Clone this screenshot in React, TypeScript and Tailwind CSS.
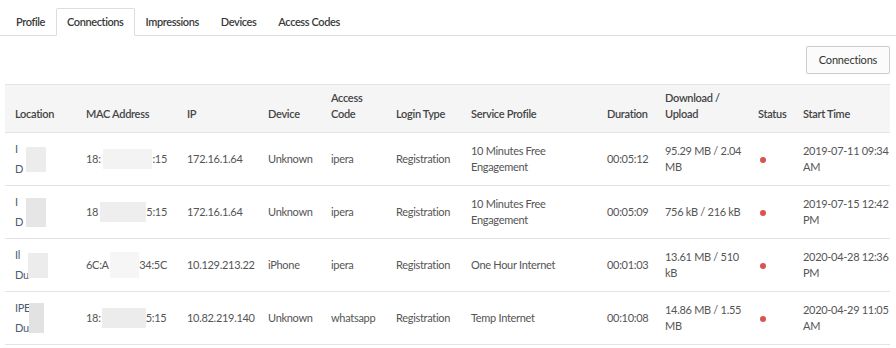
import React from 'react';

type Row = {
  loc1: string;
  loc2: string;
  locBox: string;
  macLeft: string;
  macRight: string;
  macBox: string;
  ip: string;
  device: string;
  code: string;
  service: string[];
  duration: string;
  transfer: string[];
  start: string[];
};

const rows: Row[] = [
  {
    loc1: 'I',
    loc2: 'D',
    locBox: 'ml-[3px] h-[25px] w-[20px] bg-[#ececec]',
    macLeft: '18:',
    macRight: ':15',
    macBox: 'ml-[2px] h-[20px] w-[52px] bg-[#f3f3f3]',
    ip: '172.16.1.64',
    device: 'Unknown',
    code: 'ipera',
    service: ['10 Minutes Free', 'Engagement'],
    duration: '00:05:12',
    transfer: ['95.29 MB / 2.04', 'MB'],
    start: ['2019-07-11 09:34', 'AM'],
  },
  {
    loc1: 'I',
    loc2: 'D',
    locBox: 'ml-[3px] h-[29px] w-[20px] bg-[#e6e6e6]',
    macLeft: '18',
    macRight: '5:15',
    macBox: 'ml-[2px] h-[20px] w-[48px] bg-[#eeeeee]',
    ip: '172.16.1.64',
    device: 'Unknown',
    code: 'ipera',
    service: ['10 Minutes Free', 'Engagement'],
    duration: '00:05:09',
    transfer: ['756 kB / 216 kB'],
    start: ['2019-07-15 12:42', 'PM'],
  },
  {
    loc1: 'Il',
    loc2: 'Du',
    locBox: '-ml-[1px] h-[25px] w-[20px] bg-[#ececec]',
    macLeft: '6C:A',
    macRight: '34:5C',
    macBox: 'ml-[1px] h-[26px] w-[34px] bg-[#f6f6f6]',
    ip: '10.129.213.22',
    device: 'iPhone',
    code: 'ipera',
    service: ['One Hour Internet'],
    duration: '00:01:03',
    transfer: ['13.61 MB / 510', 'kB'],
    start: ['2020-04-28 12:36', 'PM'],
  },
  {
    loc1: 'IPE',
    loc2: 'Du',
    locBox: '-ml-[1px] h-[30px] w-[15px] bg-[#e2e2e2]',
    macLeft: '18:',
    macRight: '5:15',
    macBox: 'ml-[1px] h-[20px] w-[44px] bg-[#ececec]',
    ip: '10.82.219.140',
    device: 'Unknown',
    code: 'whatsapp',
    service: ['Temp Internet'],
    duration: '00:10:08',
    transfer: ['14.86 MB / 1.55', 'MB'],
    start: ['2020-04-29 11:05', 'AM'],
  },
];

const tabs = ['Profile', 'Connections', 'Impressions', 'Devices', 'Access Codes'];

const widths = [71, 101, 81, 63, 65, 75, 136, 58, 93, 45, 97];

const headers = [
  ['Location'],
  ['MAC Address'],
  ['IP'],
  ['Device'],
  ['Access', 'Code'],
  ['Login Type'],
  ['Service Profile'],
  ['Duration'],
  ['Download /', 'Upload'],
  ['Status'],
  ['Start Time'],
];

function Lines({ lines }: { lines: string[] }) {
  return (
    <>
      {lines.map((l, i) => (
        <div key={i} className="whitespace-nowrap">
          {l}
        </div>
      ))}
    </>
  );
}

export default function App() {
  return (
    <div className="h-[348px] w-[896px] bg-white font-['Lato','Liberation_Sans',sans-serif] text-[11px] leading-[16px] tracking-[-0.3px] text-[#555]">
      <div className="flex border-b border-[#ddd] pl-[5px] pr-[6px] pt-[8px]">
        {tabs.map((t) => (
          <div
            key={t}
            className={
              t === 'Connections'
                ? '-mb-px h-[28px] rounded-t-[2px] border border-[#ddd] border-b-white bg-white px-[10px] pt-[5px] font-semibold tracking-[-0.4px] text-[#3a3a3a]'
                : 'h-[27px] border border-transparent px-[10px] pt-[5px] font-semibold tracking-[-0.4px] text-[#3a3a3a]'
            }
          >
            {t}
          </div>
        ))}
      </div>

      <div className="flex justify-end pr-[6px] pt-[10px]">
        <button className="h-[28px] w-[84px] rounded-[2px] border border-[#ccc] bg-[#fbfbfb] text-[11px] tracking-[-0.2px] text-[#333]">
          Connections
        </button>
      </div>

      <div className="pl-[5px] pr-[6px] pt-[10px]">
        <table className="w-[885px] table-fixed border-collapse">
          <colgroup>
            {widths.map((w, i) => (
              <col key={i} style={{ width: w }} />
            ))}
          </colgroup>
          <thead>
            <tr className="h-[48px] border-y border-[#e3e3e3] bg-[#f5f5f5] text-left align-bottom">
              {headers.map((h, i) => (
                <th key={i} className="px-[10px] pb-[10px] font-semibold text-[#444]">
                  <Lines lines={h} />
                </th>
              ))}
            </tr>
          </thead>
          <tbody>
            {rows.map((r, i) => (
              <tr key={i} className="h-[53px] border-b border-[#e3e3e3] align-middle">
                <td className="px-[10px]">
                  <div className="flex items-center">
                    <div className="text-[#4f5b73]">
                      <div>{r.loc1}</div>
                      <div className="mt-[4px]">{r.loc2}</div>
                    </div>
                    <div className={r.locBox} />
                  </div>
                </td>
                <td className="px-[10px]">
                  <div className="flex items-center whitespace-nowrap">
                    <span>{r.macLeft}</span>
                    <span className={r.macBox} />
                    <span>{r.macRight}</span>
                  </div>
                </td>
                <td className="px-[10px]">{r.ip}</td>
                <td className="px-[10px]">{r.device}</td>
                <td className="px-[10px]">{r.code}</td>
                <td className="px-[10px]">Registration</td>
                <td className="px-[10px]">
                  <Lines lines={r.service} />
                </td>
                <td className="px-[10px]">{r.duration}</td>
                <td className="px-[10px]">
                  <Lines lines={r.transfer} />
                </td>
                <td className="px-[10px]">
                  <span className="ml-[2px] inline-block h-[6px] w-[6px] rounded-full bg-[#d9534f] align-middle" />
                </td>
                <td className="pl-[10px]">
                  <Lines lines={r.start} />
                </td>
              </tr>
            ))}
          </tbody>
        </table>
      </div>
    </div>
  );
}
